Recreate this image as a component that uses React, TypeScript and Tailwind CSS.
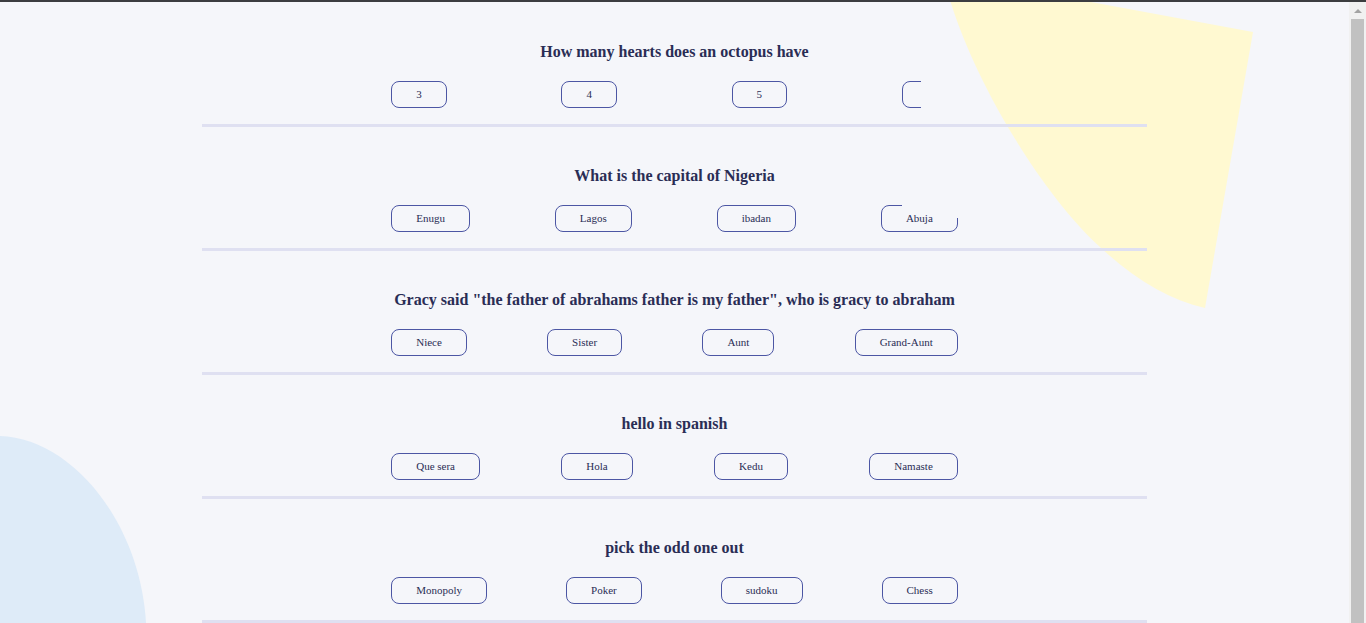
import React from 'react';

type Question = {
  title: string;
  options: string[];
};

const questions: Question[] = [
  { title: 'How many hearts does an octopus have', options: ['3', '4', '5', ''] },
  { title: 'What is the capital of Nigeria', options: ['Enugu', 'Lagos', 'ibadan', 'Abuja'] },
  { title: 'Gracy said "the father of abrahams father is my father", who is gracy to abraham', options: ['Niece', 'Sister', 'Aunt', 'Grand-Aunt'] },
  { title: 'hello in spanish', options: ['Que sera', 'Hola', 'Kedu', 'Namaste'] },
  { title: 'pick the odd one out', options: ['Monopoly', 'Poker', 'sudoku', 'Chess'] },
];

function Option({ label, qIndex, oIndex }: { label: string; qIndex: number; oIndex: number }) {
  // first question's last option and Abuja are mid-way through the border animation
  const drawingEmpty = qIndex === 0 && oIndex === 3;
  const drawingAbuja = qIndex === 1 && oIndex === 3;

  return (
    <button
      type="button"
      className={`relative flex h-[27px] items-center justify-center rounded-[8px] border border-[#4c56a4] bg-transparent px-6 text-[11px] text-[#2a2d55] ${drawingEmpty ? 'w-[56px]' : ''}`}
    >
      {label}
      {drawingEmpty ? (
        <span className="absolute -top-px -right-px -bottom-px left-[18px] bg-[#f5f6fa]" />
      ) : null}
      {drawingAbuja ? (
        <>
          <span className="absolute -top-px -right-px left-[20px] h-[2px] bg-[#f5f6fa]" />
          <span className="absolute -top-px -right-px h-[13px] w-[10px] bg-[#f5f6fa]" />
        </>
      ) : null}
    </button>
  );
}

export default function App() {
  return (
    <div className="flex h-[623px] w-full flex-col overflow-hidden bg-[#f5f6fa]" style={{ fontFamily: '"Liberation Serif", "Times New Roman", serif' }}>
      <div className="h-[2px] w-full shrink-0 bg-[#3c3d40]" />
      <div className="flex min-h-0 flex-1">
        <main className="relative min-w-0 flex-1 overflow-hidden">
          <svg className="pointer-events-none absolute inset-0 h-full w-full" viewBox="0 0 1349 621" preserveAspectRatio="none">
            <path d="M950 -2 C975 80 1040 190 1100 245 C1135 278 1170 298 1205 306 L1253 30 L1080 -2 Z" fill="#fff9d1" />
            <path d="M0 434 C70 436 140 518 146 621 L0 621 Z" fill="#deebf8" />
          </svg>
          <div className="relative mx-auto w-[70%] pt-px">
            {questions.map((q, qi) => (
              <section key={qi} className="flex flex-col items-center border-b-[3px] border-[#dfe0f1] pt-[38px] pb-4">
                <h3 className="text-center text-[16px] leading-[22px] font-bold text-[#2a2d55]">{q.title}</h3>
                <div className="mt-[18px] flex w-[60%] items-center justify-between">
                  {q.options.map((opt, oi) => (
                    <Option key={oi} label={opt} qIndex={qi} oIndex={oi} />
                  ))}
                </div>
              </section>
            ))}
          </div>
        </main>
        <div className="relative flex w-[17px] shrink-0 flex-col bg-[#f1f1f1]">
          <div className="flex h-[17px] items-center justify-center">
            <div className="h-0 w-0 border-x-[4px] border-b-[4px] border-x-transparent border-b-[#a3a3a3]" />
          </div>
          <div className="ml-[2px] w-[13px] flex-1 bg-[#c1c1c1]" />
        </div>
      </div>
    </div>
  );
}
